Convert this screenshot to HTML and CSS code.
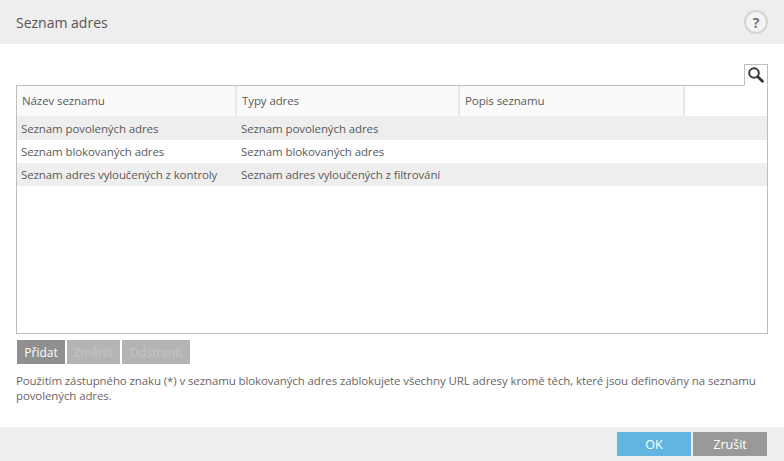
FILE: index.html
```html
<!DOCTYPE html>
<html lang="cs">
<head>
<meta charset="utf-8">
<title>Seznam adres</title>
<link rel="stylesheet" href="styles.css">
</head>
<body>
<div class="dialog">
  <header class="titlebar">
    <h1 class="title">Seznam adres</h1>
    <span class="help">?</span>
  </header>
  <main class="content">
    <div class="search-row">
      <span class="search-btn">
        <svg width="18" height="18" viewBox="0 0 18 18"><circle cx="7" cy="7" r="4.8" fill="none" stroke="#3a3a3a" stroke-width="2"/><path d="M10.8 10.8 L15.4 15.2" stroke="#333" stroke-width="2.8" stroke-linecap="round"/></svg>
      </span>
    </div>
    <div class="table">
      <div class="thead">
        <div class="th c1">Název seznamu</div>
        <div class="th c2">Typy adres</div>
        <div class="th c3">Popis seznamu</div>
        <div class="th c4"></div>
      </div>
      <div class="row alt first"><div class="td c1">Seznam povolených adres</div><div class="td c2">Seznam povolených adres</div></div>
      <div class="row"><div class="td c1">Seznam blokovaných adres</div><div class="td c2">Seznam blokovaných adres</div></div>
      <div class="row alt"><div class="td c1">Seznam adres vyloučených z kontroly</div><div class="td c2">Seznam adres vyloučených z filtrování</div></div>
    </div>
    <div class="actions">
      <button class="btn active b1">Přidat</button>
      <button class="btn disabled b2">Změnit</button>
      <button class="btn disabled b3">Odstranit</button>
    </div>
    <p class="note">Použitím zástupného znaku (*) v seznamu blokovaných adres zablokujete všechny URL adresy kromě těch, které jsou definovány na seznamu povolených adres.</p>
  </main>
  <footer class="footer">
    <button class="fbtn ok">OK</button>
    <button class="fbtn cancel">Zrušit</button>
  </footer>
</div>
</body>
</html>
```
FILE: styles.css
```css
* { box-sizing: border-box; }
html, body { margin: 0; padding: 0; background: #fff; }
body { font-family: "Open Sans", "Noto Sans", sans-serif; color: #444; }
.dialog { width: 784px; height: 461px; display: flex; flex-direction: column; }
.titlebar { height: 44px; background: #eeeeee; display: flex; align-items: center; justify-content: space-between; padding: 0 16px 0 16px; }
.title { margin: 0; font-size: 14px; font-weight: 400; color: #555; }
.help { width: 24px; height: 24px; border: 2px solid #d4d4d4; border-radius: 50%; display: flex; align-items: center; justify-content: center; font-size: 14px; font-weight: 700; color: #707070; background: #f3f3f3; }
.content { flex: 1; padding: 20px 16px 0; display: flex; flex-direction: column; }
.search-row { display: flex; justify-content: flex-end; height: 22px; position: relative; z-index: 1; margin-bottom: -1px; }
.search-btn { width: 24px; height: 22px; border: 1px solid #bdbdc4; border-bottom-color: #fff; background: #fff; display: flex; align-items: center; justify-content: center; }
.table { width: 752px; height: 249px; border: 1px solid #bdbdc4; background: #fff; }
.thead { display: flex; height: 30px; background: #fafafa; }
.th { height: 30px; line-height: 30px; padding-left: 5px; font-size: 11.5px; letter-spacing: -0.1px; color: #5a5a5a; border-right: 2px solid #e8e8e8; }
.thead .c1 { width: 220px; }
.thead .c2 { width: 223px; }
.thead .c3 { width: 225px; }
.thead .c4 { flex: 1; background: #fff; border-right: 0; }
.row { display: flex; height: 23px; line-height: 23px; font-size: 11.5px; letter-spacing: -0.1px; color: #5a5a5a; }
.row.first { height: 24px; padding-top: 1px; }
.row.alt { background: #eeeeee; }
.td { padding-left: 4px; white-space: nowrap; }
.row .c1 { width: 220px; }
.row .c2 { width: 224px; }
.actions { display: flex; gap: 2px; margin: 6px 0 0 1px; }
.btn { height: 24px; border: 0; padding: 0; font: inherit; font-size: 12px; }
.btn.active { background: #8f8f8f; color: #fff; }
.btn.disabled { background: #b4b4b4; color: #c4c4c4; }
.b1 { width: 48px; }
.b2 { width: 53px; }
.b3 { width: 68px; }
.note { margin: 9px 0 0; font-size: 11.5px; letter-spacing: -0.11px; line-height: 15px; color: #6b6666; }
.footer { height: 34px; background: #eeeeee; display: flex; justify-content: flex-end; gap: 2px; padding: 5px 17px 0 0; }
.fbtn { width: 74px; height: 24px; border: 0; padding: 0; font: inherit; font-size: 12.5px; color: #fff; }
.ok { background: #62b5e0; }
.cancel { background: #999999; }
```
